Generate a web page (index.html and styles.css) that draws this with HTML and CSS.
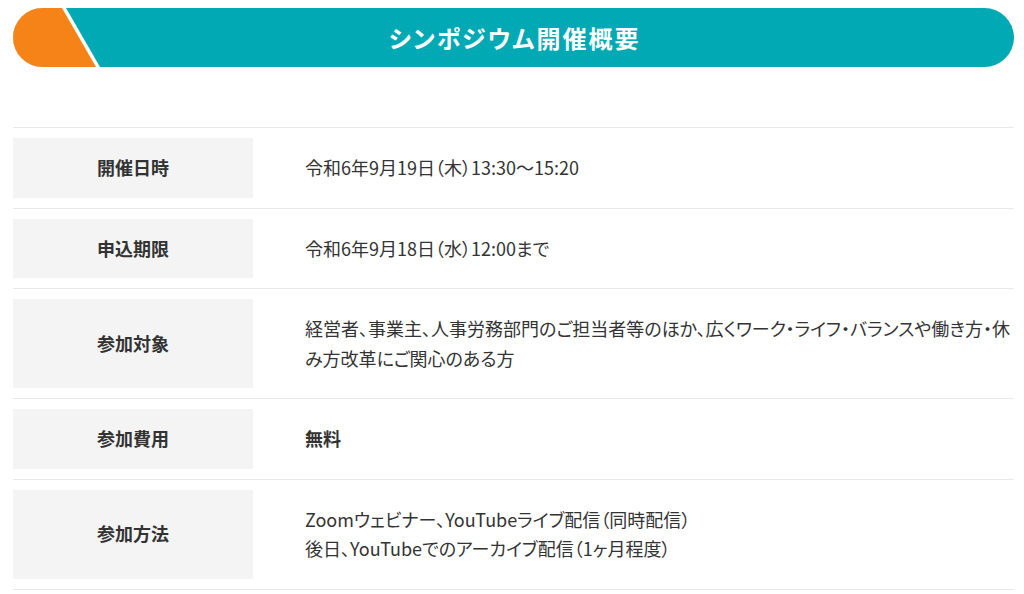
FILE: index.html
```html
<!DOCTYPE html>
<html lang="ja">
<head>
<meta charset="utf-8">
<link rel="stylesheet" href="styles.css">
</head>
<body>
<div class="page">
  <h2 class="heading"><span class="heading-text">シンポジウム開催概要</span></h2>
  <div class="table">
    <div class="row">
      <div class="label">開催日時</div>
      <div class="value">令和6年9月19日（木）13:30〜15:20</div>
    </div>
    <div class="row">
      <div class="label">申込期限</div>
      <div class="value">令和6年9月18日（水）12:00まで</div>
    </div>
    <div class="row">
      <div class="label">参加対象</div>
      <div class="value">経営者、事業主、人事労務部門のご担当者等のほか、広くワーク・ライフ・バランスや働き方・休み方改革にご関心のある方</div>
    </div>
    <div class="row">
      <div class="label">参加費用</div>
      <div class="value"><strong>無料</strong></div>
    </div>
    <div class="row">
      <div class="label">参加方法</div>
      <div class="value">Zoomウェビナー、YouTubeライブ配信（同時配信）<br>後日、YouTubeでのアーカイブ配信（1ヶ月程度）</div>
    </div>
  </div>
</div>
</body>
</html>
```

FILE: styles.css
```css
* { box-sizing: border-box; }
html, body { margin: 0; padding: 0; background: #fff; }
body {
  font-family: "Noto Sans CJK JP", "Noto Sans", sans-serif;
  color: #333;
  font-feature-settings: "palt";
}
.page {
  padding: 8px 10px 0 13px;
}
.heading {
  position: relative;
  margin: 0;
  height: 59px;
  border-radius: 30px;
  background: #00a9b3;
  overflow: hidden;
  display: flex;
  align-items: center;
  justify-content: center;
}
.heading::before,
.heading::after {
  content: "";
  position: absolute;
  left: 0;
  top: 0;
  bottom: 0;
  width: 100px;
}
.heading::before {
  background: #fff;
  clip-path: polygon(0 0, 53px 0, 87px 100%, 0 100%);
}
.heading::after {
  background: #f68317;
  clip-path: polygon(0 0, 49px 0, 83px 100%, 0 100%);
}
.heading-text {
  position: relative;
  z-index: 1;
  color: #fff;
  font-size: 24px;
  font-weight: 700;
  letter-spacing: 2px;
  line-height: 1;
  padding-left: 2px;
}
.table {
  margin-top: 60px;
  border-top: 1px solid #e9e9e9;
}
.row {
  display: flex;
  padding: 10px 0;
  border-bottom: 1px solid #e9e9e9;
}
.label {
  flex: 0 0 240px;
  background: #f4f4f4;
  display: flex;
  align-items: center;
  justify-content: center;
  font-size: 18px;
  font-weight: 700;
  padding: 15px 0;
  line-height: 29.5px;
  color: #333;
}
.value {
  flex: 1;
  padding: 15px 0 15px 52px;
  font-size: 18px;
  line-height: 29.5px;
  align-self: center;
}
.value strong { font-weight: 700; }
```
